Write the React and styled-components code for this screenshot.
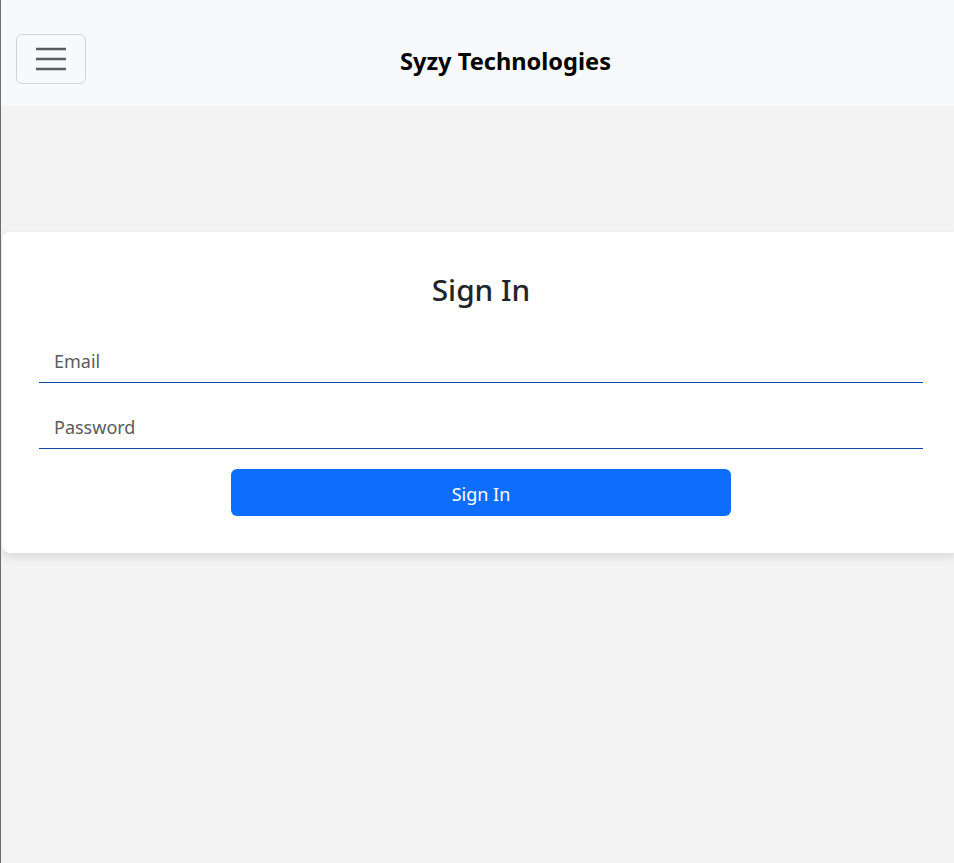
import React from "react";
import styled, { createGlobalStyle } from "styled-components";

const GlobalStyle = createGlobalStyle`
  html, body {
    margin: 0;
    padding: 0;
    overflow: hidden;
  }
  body {
    font-family: "Noto Sans", "Open Sans", Arial, sans-serif;
    background: #f3f3f3;
    color: #212529;
  }
  * {
    box-sizing: border-box;
  }
`;

const Page = styled.div`
  min-height: 863px;
  border-left: 1px solid #6e6e6e;
  background: #f3f3f3;
`;

const Navbar = styled.nav`
  height: 106px;
  display: flex;
  align-items: center;
  padding: 12px 15px 0;
  background: #f8f9fa;
`;

const Toggler = styled.button`
  width: 70px;
  height: 50px;
  display: flex;
  align-items: center;
  justify-content: center;
  padding: 0;
  background: transparent;
  border: 1px solid rgba(0, 0, 0, 0.15);
  border-radius: 6px;
  cursor: pointer;
`;

const BrandArea = styled.div`
  flex: 1;
  display: flex;
  justify-content: center;
  padding-right: 14px;
`;

const Brand = styled.span`
  font-size: 23.6px;
  font-weight: 700;
  color: #000;
  padding-top: 4px;
`;

const Card = styled.div`
  margin: 126px 0 0 1px;
  width: 958px;
  padding: 40px 37px 37px;
  background: #fff;
  border-radius: 8px;
  box-shadow: 0 4px 8px rgba(0, 0, 0, 0.1);
`;

const Title = styled.h2`
  margin: 0 0 25px;
  text-align: center;
  font-size: 29.8px;
  font-weight: 500;
  line-height: 1.2;
  color: #212529;
`;

const Form = styled.form`
  display: flex;
  flex-direction: column;
  align-items: center;
  gap: 16px;
`;

const Input = styled.input`
  width: 100%;
  height: 50px;
  padding: 8px 15px 0;
  border: none;
  border-bottom: 1px solid #0d47a1;
  background: transparent;
  font-family: inherit;
  font-size: 18px;
  color: #212529;
  outline: none;

  &::placeholder {
    color: #595c5f;
  }
`;

const SubmitButton = styled.button`
  width: 500px;
  height: 47px;
  margin-top: 4px;
  padding: 4px 0 0;
  border: none;
  border-radius: 6px;
  background: #0d6efd;
  color: #fff;
  font-family: inherit;
  font-size: 18px;
  cursor: pointer;
`;

const MenuIcon = () => (
  <svg width="32" height="30" viewBox="0 0 32 30" aria-hidden="true">
    <path
      d="M1 5h30M1 15h30M1 25h30"
      stroke="#5a5c60"
      strokeWidth="2.4"
      strokeLinecap="butt"
    />
  </svg>
);

export default function App() {
  return (
    <Page>
      <GlobalStyle />
      <Navbar>
        <Toggler type="button" aria-label="Toggle navigation">
          <MenuIcon />
        </Toggler>
        <BrandArea>
          <Brand>Syzy Technologies</Brand>
        </BrandArea>
      </Navbar>
      <Card>
        <Title>Sign In</Title>
        <Form onSubmit={(e) => e.preventDefault()}>
          <Input type="email" placeholder="Email" />
          <Input type="password" placeholder="Password" />
          <SubmitButton type="submit">Sign In</SubmitButton>
        </Form>
      </Card>
    </Page>
  );
}
